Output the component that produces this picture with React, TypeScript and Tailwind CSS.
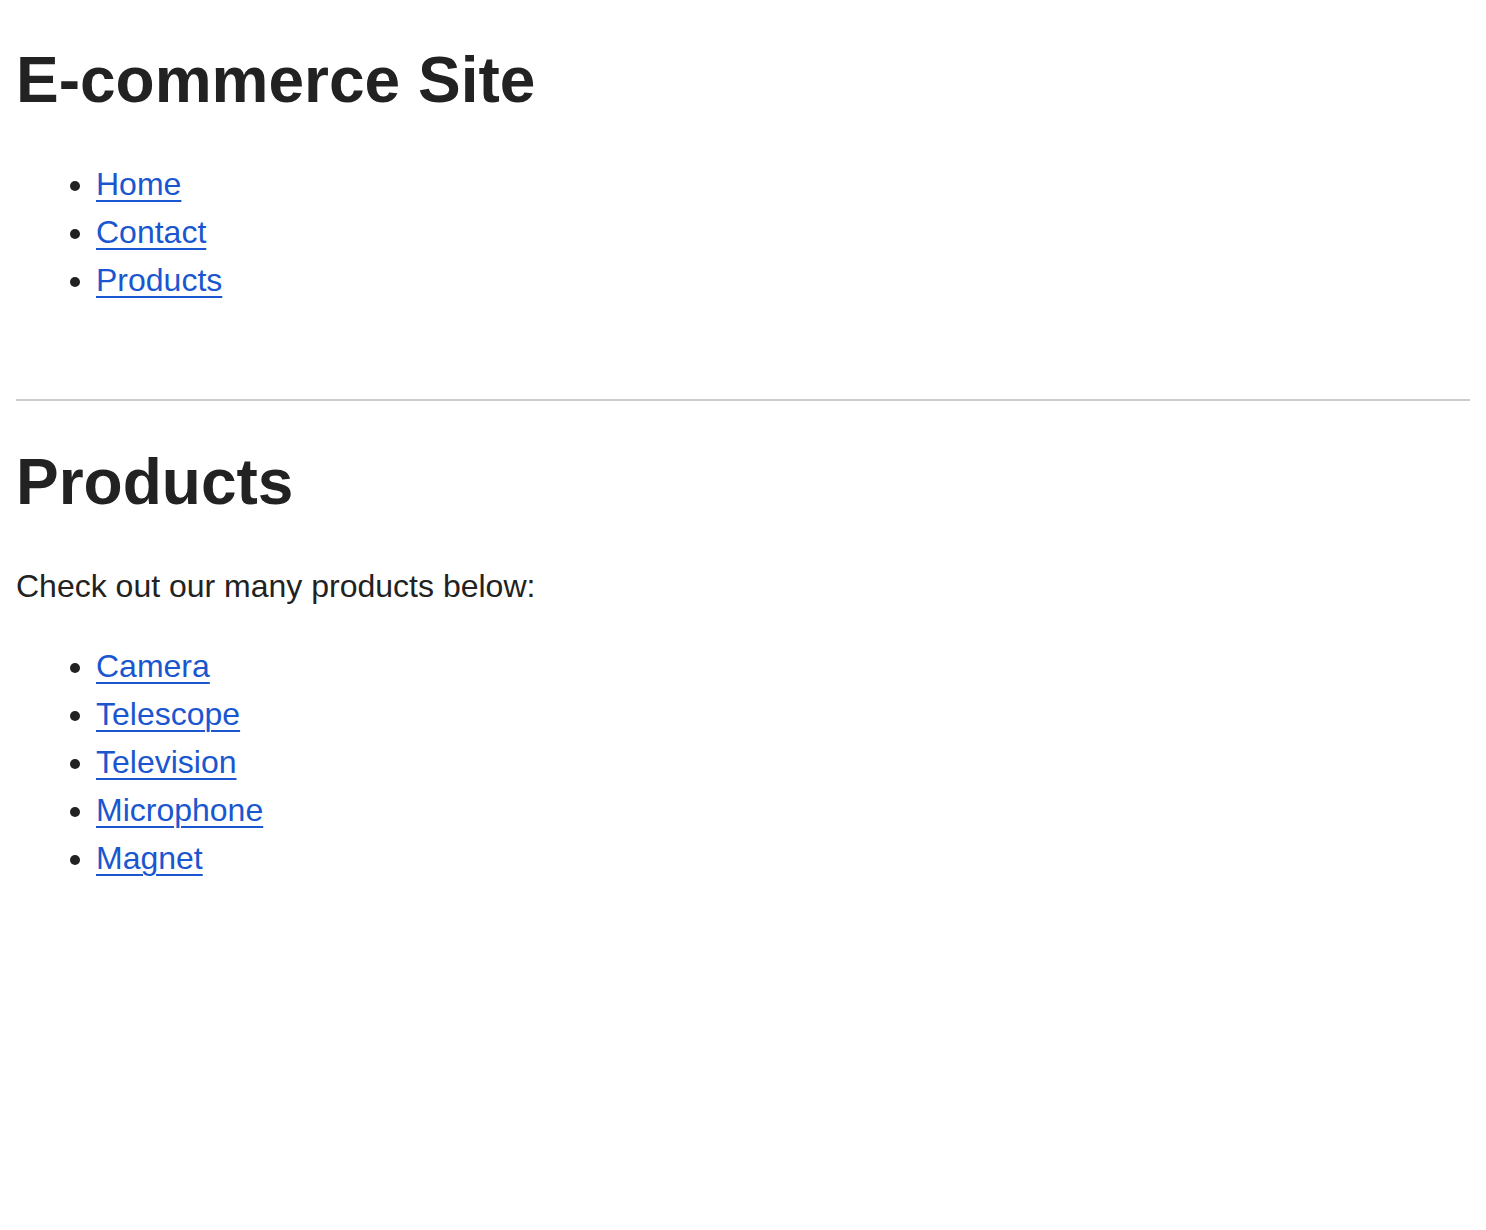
import React from "react";

export default function App() {
  const nav = ["Home", "Contact", "Products"];
  const products = ["Camera", "Telescope", "Television", "Microphone", "Magnet"];
  const link = "text-[#1a56d0] underline decoration-[2px] underline-offset-[5px]";
  return (
    <div className="min-h-[1230px] bg-white p-4 text-[#222222] font-['Liberation_Sans',Arial,sans-serif] text-[32px] leading-[48px]">
      <h1 className="mt-[26px] mb-[42px] text-[64px] font-bold leading-[76px]">E-commerce Site</h1>
      <ul className="list-disc pl-[80px] mb-[95px]">
        {nav.map((n) => (
          <li key={n}>
            <a href="#" className={link}>{n}</a>
          </li>
        ))}
      </ul>
      <hr className="border-0 h-[2px] bg-[#cccccc]" />
      <h1 className="mt-[43px] mb-[42px] text-[64px] font-bold leading-[76px]">Products</h1>
      <p className="mb-[32px]">Check out our many products below:</p>
      <ul className="list-disc pl-[80px]">
        {products.map((n) => (
          <li key={n}>
            <a href="#" className={link}>{n}</a>
          </li>
        ))}
      </ul>
    </div>
  );
}
